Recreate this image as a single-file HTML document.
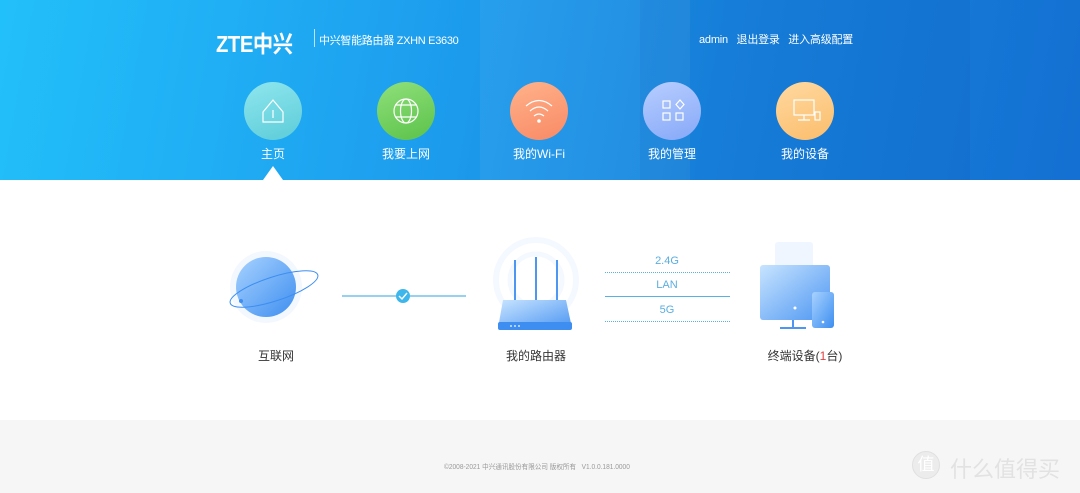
<!DOCTYPE html>
<html><head><meta charset="utf-8"><style>
*{margin:0;padding:0;box-sizing:border-box}
body{width:1080px;height:493px;overflow:hidden;background:#fff;font-family:"Liberation Sans","Noto Sans CJK SC",sans-serif;position:relative}
.hd{position:absolute;left:0;top:0;width:1080px;height:180px;background:linear-gradient(100deg,#22c0fa 0%,#1ea2f0 35%,#1680dc 70%,#1470d2 100%);overflow:hidden}
.hd .sh{position:absolute;background:rgba(255,255,255,.05)}
.t{position:absolute;color:#fff;white-space:nowrap}
.c{position:absolute;width:58px;height:58px;border-radius:50%;top:82px}
.lbl{position:absolute;top:145px;width:120px;text-align:center;color:#fff;font-size:12px}
.ft{position:absolute;left:0;top:420px;width:1080px;height:73px;background:#f6f6f6}
.g{position:absolute;font-size:12px;color:#333;text-align:center}
.dl{position:absolute;height:0;border-top:1px dotted #5ab0e0}
</style></head><body>
<div class="hd">
<div class="sh" style="left:480px;top:0;width:210px;height:180px"></div>
<div class="sh" style="left:640px;top:0;width:330px;height:180px;background:rgba(0,0,80,.04)"></div>
<div class="t" style="left:216px;top:25px;font-size:23px;font-weight:bold;letter-spacing:-0.5px;transform:scaleX(0.88);transform-origin:left">ZTE中兴</div>
<div style="position:absolute;left:314px;top:29px;width:1px;height:18px;background:rgba(255,255,255,.7)"></div>
<div class="t" style="left:319px;top:32px;font-size:11px;letter-spacing:-0.3px">中兴智能路由器 ZXHN E3630</div>
<div class="t" style="left:699px;top:31px;font-size:11px;letter-spacing:-0.2px">admin&nbsp;&nbsp;&nbsp;退出登录&nbsp;&nbsp;&nbsp;进入高级配置</div>
<div class="c" style="left:244px;background:linear-gradient(160deg,#8fe6ee,#5cccd8)"></div>
<div class="c" style="left:377px;background:linear-gradient(160deg,#8fe07a,#5cc24a)"></div>
<div class="c" style="left:510px;background:linear-gradient(160deg,#ffb28a,#f88a66)"></div>
<div class="c" style="left:643px;background:linear-gradient(160deg,#b8ceff,#86a8f8)"></div>
<div class="c" style="left:776px;background:linear-gradient(160deg,#ffd9a0,#fbbd6c)"></div>
<svg style="position:absolute;left:0;top:0" width="1080" height="180" fill="none" stroke="#fff" stroke-width="1.2">
<path d="M263 112 L273 100 L283 112 V122 H263 Z M273 110 V118"/>
<circle cx="406" cy="111" r="12"/><ellipse cx="406" cy="111" rx="5.5" ry="12"/><path d="M395 105H417M395 117H417"/>
<path d="M526 106 Q539 95 552 106 M530 111 Q539 103 548 111 M534 116 Q539 112 544 116"/><circle cx="539" cy="121" r="1.2" fill="#fff"/>
<rect x="663" y="101" width="7" height="7"/><path d="M680 100 L684 104.5 L680 109 L676 104.5 Z"/><rect x="663" y="113" width="7" height="7"/><rect x="676" y="113" width="7" height="7"/>
<rect x="794" y="100" width="20" height="15"/><path d="M804 115 V120 M798 120 H810"/><rect x="815" y="112" width="5" height="8"/>
</svg>
<div class="lbl" style="left:213px">主页</div>
<div class="lbl" style="left:346px">我要上网</div>
<div class="lbl" style="left:479px">我的Wi-Fi</div>
<div class="lbl" style="left:612px">我的管理</div>
<div class="lbl" style="left:745px">我的设备</div>
<div style="position:absolute;left:263px;top:166px;width:0;height:0;border-left:10px solid transparent;border-right:10px solid transparent;border-bottom:14px solid #fff"></div>
</div>

<svg style="position:absolute;left:0;top:230px" width="1080" height="110">
<defs>
<linearGradient id="gb" x1="0" y1="0" x2="1" y2="1"><stop offset="0" stop-color="#a8d2ff"/><stop offset="1" stop-color="#3d8ef0"/></linearGradient>
<linearGradient id="gr" x1="0" y1="0" x2="1" y2="1"><stop offset="0" stop-color="#c8e4ff"/><stop offset="1" stop-color="#4d96f2"/></linearGradient>
</defs>
<circle cx="266" cy="57" r="36" fill="#f3f8ff"/>
<circle cx="266" cy="57" r="30" fill="url(#gb)"/>
<ellipse cx="274" cy="59" rx="46" ry="12" transform="rotate(-18 274 59)" fill="none" stroke="#3d8ef0" stroke-width="1"/>
<circle cx="241" cy="71" r="2" fill="#3d8ef0"/>
<line x1="342" y1="66" x2="466" y2="66" stroke="#57b8e8" stroke-width="1.2"/>
<circle cx="403" cy="66" r="7" fill="#3db6ec"/><path d="M399 66 L402 69 L407 63" stroke="#fff" stroke-width="1.4" fill="none"/>
<circle cx="536" cy="50" r="40" fill="none" stroke="#f4f8ff" stroke-width="6"/>
<circle cx="536" cy="50" r="26" fill="none" stroke="#f4f8ff" stroke-width="5"/>
<path d="M515 30V75M536 27V75M557 30V75" stroke="#4d96f2" stroke-width="2"/>
<path d="M503 70 H566 L572 98 H498 Z" fill="url(#gr)"/>
<rect x="498" y="92" width="74" height="8" rx="2" fill="#3d8ef0"/>
<circle cx="511" cy="96" r=".9" fill="#fff"/><circle cx="515" cy="96" r=".9" fill="#fff"/><circle cx="519" cy="96" r=".9" fill="#fff"/>
<rect x="775" y="12" width="38" height="30" rx="3" fill="#f0f6ff"/>
<rect x="760" y="35" width="70" height="55" rx="3" fill="url(#gr)"/>
<path d="M793 90 V98 M780 98 H806" stroke="#4d96f2" stroke-width="2"/>
<circle cx="795" cy="78" r="1.5" fill="#fff"/>
<rect x="812" y="62" width="22" height="36" rx="3" fill="url(#gb)"/>
<circle cx="823" cy="92" r="1.3" fill="#fff"/>
</svg>
<div class="g" style="left:640px;top:255px;width:54px;font-size:11px;color:#5aaee0">2.4G</div>
<div class="dl" style="left:605px;top:272px;width:125px"></div>
<div class="g" style="left:640px;top:279px;width:54px;font-size:11px;color:#5aaee0">LAN</div>
<div style="position:absolute;left:605px;top:296px;width:125px;height:1px;background:#5ab0e0"></div>
<div class="g" style="left:640px;top:304px;width:54px;font-size:11px;color:#5aaee0">5G</div>
<div class="dl" style="left:605px;top:321px;width:125px"></div>
<div class="g" style="left:236px;top:347px;width:80px">互联网</div>
<div class="g" style="left:496px;top:347px;width:80px">我的路由器</div>
<div class="g" style="left:750px;top:347px;width:110px">终端设备(<span style="color:#e04040">1</span>台)</div>
<div class="ft">
<div class="t" style="left:444px;top:42px;font-size:7px;color:#999;transform:scaleX(0.94);transform-origin:left">©2008-2021 中兴通讯股份有限公司 版权所有&nbsp;&nbsp;&nbsp;V1.0.0.181.0000</div>
<div style="position:absolute;left:912px;top:31px;width:28px;height:28px;border-radius:50%;background:#ececec;border:1px solid #e0e0e0;color:#fff;font-size:17px;text-align:center;line-height:26px">值</div>
<div class="t" style="left:950px;top:32px;font-size:22px;color:#e2e2e2">什么值得买</div>
</div>
</body></html>
